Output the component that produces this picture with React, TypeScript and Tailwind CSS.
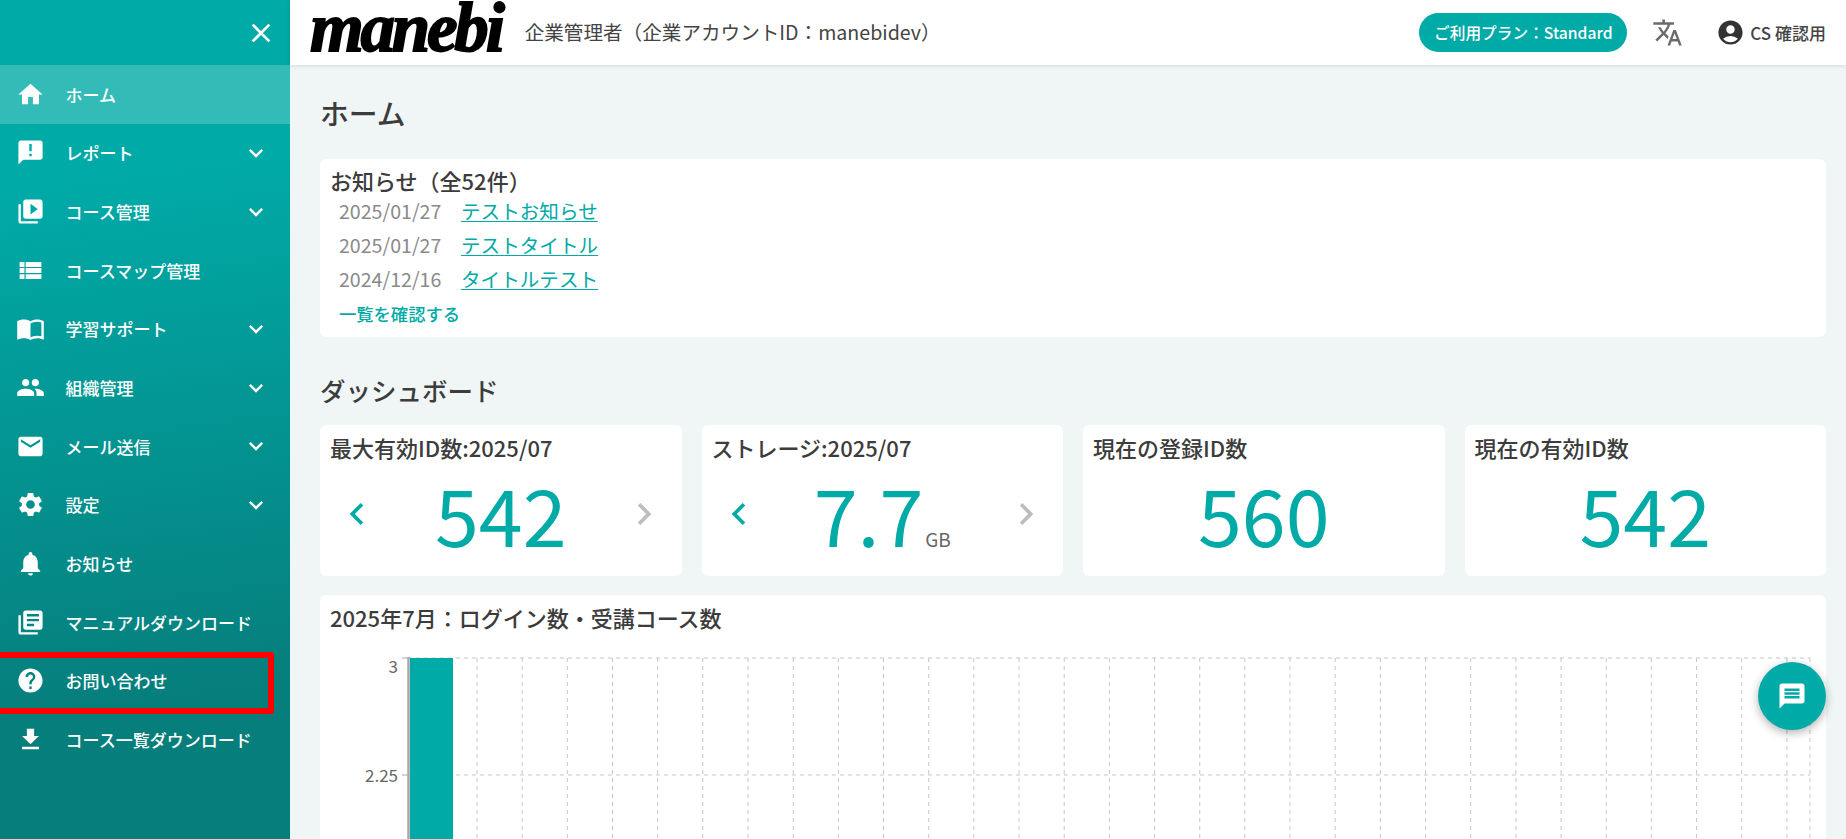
import React from "react";
import {
  MdHome, MdAnnouncement, MdVideoLibrary, MdViewList, MdImportContacts, MdPeople, MdEmail, MdSettings,
  MdNotifications, MdLibraryBooks, MdHelp, MdFileDownload, MdKeyboardArrowDown, MdClose, MdTranslate,
  MdAccountCircle, MdMessage, MdKeyboardArrowLeft, MdKeyboardArrowRight,
} from "react-icons/md";

const font = { fontFamily: '"Noto Sans CJK JP", "Noto Sans", sans-serif' };

const items = [
  { icon: MdHome, label: "ホーム", active: true },
  { icon: MdAnnouncement, label: "レポート", more: true },
  { icon: MdVideoLibrary, label: "コース管理", more: true },
  { icon: MdViewList, label: "コースマップ管理" },
  { icon: MdImportContacts, label: "学習サポート", more: true },
  { icon: MdPeople, label: "組織管理", more: true },
  { icon: MdEmail, label: "メール送信", more: true },
  { icon: MdSettings, label: "設定", more: true },
  { icon: MdNotifications, label: "お知らせ" },
  { icon: MdLibraryBooks, label: "マニュアルダウンロード" },
  { icon: MdHelp, label: "お問い合わせ" },
  { icon: MdFileDownload, label: "コース一覧ダウンロード" },
];

const notices = [
  ["2025/01/27", "テストお知らせ"],
  ["2025/01/27", "テストタイトル"],
  ["2024/12/16", "タイトルテスト"],
];

function Sidebar() {
  return (
    <aside className="relative w-[290px] shrink-0 h-full bg-[linear-gradient(172deg,#00aaa7_22%,#067e7c_82%)] text-white">
      <div className="h-[65px] flex items-center justify-end pr-[13px]">
        <MdClose className="w-[32px] h-[32px] text-white" />
      </div>
      <nav className="flex flex-col">
        {items.map((it) => (
          <div key={it.label} className={`h-[58.67px] flex items-center pl-[16px] pr-[20px] ${it.active ? "bg-white/20" : ""}`}>
            <it.icon className="w-[29px] h-[29px] shrink-0" />
            <span className="ml-[20.5px] flex-1 text-[17px] font-medium leading-none">{it.label}</span>
            {it.more && <MdKeyboardArrowDown className="w-[28px] h-[28px] shrink-0" />}
          </div>
        ))}
      </nav>
      <div className="absolute left-[-6px] top-[652px] w-[280px] h-[62px] border-[6px] border-[#ff0000] rounded-[3px]" />
    </aside>
  );
}

function Header() {
  return (
    <header className="relative z-10 h-[65px] shrink-0 bg-white shadow-[0_1px_4px_rgba(0,0,0,0.12)] flex items-center pl-[20px] pr-[20px]">
      <span
        className="text-[69px] leading-[65px] font-bold italic text-black tracking-[-3.2px] mt-[-8px] [-webkit-text-stroke:1.8px_#000]"
        style={{ fontFamily: '"Liberation Serif", serif' }}
      >
        manebi
      </span>
      <span className="ml-[23px] mt-[-2px] text-[19.6px] text-[#444]">企業管理者（企業アカウントID：manebidev）</span>
      <div className="ml-auto flex items-center">
        <div className="h-[39px] w-[208px] rounded-full bg-[#00aaa6] text-white text-[15.7px] font-medium flex items-center justify-center">
          ご利用プラン：Standard
        </div>
        <MdTranslate className="w-[31px] h-[31px] ml-[25px] text-[#6b6b6b]" />
        <MdAccountCircle className="w-[29px] h-[29px] ml-[33px] text-[#333]" />
        <span className="ml-[5px] text-[17px] font-medium text-[#444]">CS 確認用</span>
      </div>
    </header>
  );
}

function Card({ title, children }: { title: string; children: React.ReactNode }) {
  return (
    <div className="h-[151px] bg-white rounded-[6px] px-[10px] pt-[7px] flex flex-col">
      <div className="text-[22px] leading-[30px] font-medium text-[#3c3c3c]">{title}</div>
      {children}
    </div>
  );
}

function Arrows({ children }: { children: React.ReactNode }) {
  return (
    <div className="flex items-center justify-between px-[5px] h-[90px] mt-[6px]">
      <MdKeyboardArrowLeft className="w-[44px] h-[44px] text-[#00aaa6] mt-[1px]" />
      {children}
      <MdKeyboardArrowRight className="w-[44px] h-[44px] text-[#bdbdbd] mt-[1px]" />
    </div>
  );
}

function Big({ children }: { children: React.ReactNode }) {
  return <div className="text-[79px] leading-[90px] text-[#00aaa6] font-normal">{children}</div>;
}

function Chart() {
  const lines = Array.from({ length: 30 }, (_, i) => 157 + i * 45.17);
  return (
    <svg width="1506" height="200" className="block">
      <g stroke="#c6c6c6" strokeWidth="1" strokeDasharray="4 4" fill="none">
        {lines.map((x) => (
          <line key={x} x1={x} x2={x} y1="8" y2="200" />
        ))}
        <line x1="1490" x2="1490" y1="8" y2="200" />
        <line x1="88" x2="1490" y1="8" y2="8" />
        <line x1="88" x2="1490" y1="125" y2="125" />
      </g>
      <rect x="90" y="8" width="43" height="192" fill="#00aaa6" />
      <line x1="88.5" x2="88.5" y1="7" y2="200" stroke="#a8a8a8" strokeWidth="2.5" />
      <line x1="82" x2="88" y1="8" y2="8" stroke="#a8a8a8" />
      <line x1="82" x2="88" y1="125" y2="125" stroke="#a8a8a8" />
      <g fill="#666666" fontSize="17" textAnchor="end">
        <text x="78" y="23">3</text>
        <text x="78" y="132">2.25</text>
      </g>
    </svg>
  );
}

export default function App() {
  return (
    <div className="flex w-full h-screen overflow-hidden bg-[#f0f5f5]" style={font}>
      <Sidebar />
      <div className="flex-1 min-w-0 flex flex-col h-full">
        <Header />
        <main className="flex-1 min-h-0 overflow-hidden pl-[30px] pr-[20px]">
          <h1 className="h-[94px] pt-[26px] text-[28.8px] leading-[44px] font-medium text-[#3c3c3c]">ホーム</h1>
          <section className="h-[178px] bg-white rounded-[6px] pl-[10px] pt-[10px]">
            <div className="text-[22px] leading-[22px] mb-[3px] font-medium text-[#3c3c3c]">お知らせ（全52件）</div>
            <div className="pl-[9px]">
              {notices.map(([d, t]) => (
                <div key={t + d} className="h-[34px] flex items-center text-[19.6px]">
                  <span className="w-[122px] text-[#8a8a8a]">{d}</span>
                  <a className="text-[#00aaa6] underline underline-offset-2">{t}</a>
                </div>
              ))}
              <div className="text-[17.3px] leading-[35px] font-medium text-[#00aaa6]">一覧を確認する</div>
            </div>
          </section>
          <h2 className="h-[88px] pt-[33px] text-[25.5px] leading-[40px] font-medium text-[#3c3c3c]">ダッシュボード</h2>
          <div className="grid grid-cols-4 gap-[20px]">
            <Card title="最大有効ID数:2025/07"><Arrows><Big>542</Big></Arrows></Card>
            <Card title="ストレージ:2025/07">
              <Arrows>
                <div className="flex items-baseline">
                  <Big>7.7</Big>
                  <span className="ml-[2px] text-[19px] text-[#666]">GB</span>
                </div>
              </Arrows>
            </Card>
            <Card title="現在の登録ID数"><div className="text-center mt-[6px]"><Big>560</Big></div></Card>
            <Card title="現在の有効ID数"><div className="text-center mt-[6px]"><Big>542</Big></div></Card>
          </div>
          <section className="mt-[19px] bg-white rounded-[6px] h-[400px]">
            <div className="h-[55px] pl-[10px] pt-[7px] text-[22px] leading-[30px] font-medium text-[#3c3c3c]">2025年7月：ログイン数・受講コース数</div>
            <Chart />
          </section>
        </main>
      </div>
      <button className="fixed left-[1757.5px] top-[662px] w-[68px] h-[68px] rounded-full bg-[#00aaa6] shadow-[0_3px_10px_rgba(0,0,0,0.3)] flex items-center justify-center">
        <MdMessage className="w-[30px] h-[30px] text-white" />
      </button>
    </div>
  );
}
